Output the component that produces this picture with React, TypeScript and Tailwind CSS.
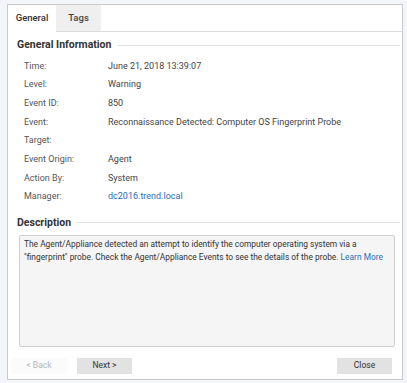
import React from 'react';

const rows: { label: string; value: string; link?: boolean }[] = [
  { label: 'Time:', value: 'June 21, 2018 13:39:07' },
  { label: 'Level:', value: 'Warning' },
  { label: 'Event ID:', value: '850' },
  { label: 'Event:', value: 'Reconnaissance Detected: Computer OS Fingerprint Probe' },
  { label: 'Target:', value: '' },
  { label: 'Event Origin:', value: 'Agent' },
  { label: 'Action By:', value: 'System' },
  { label: 'Manager:', value: 'dc2016.trend.local', link: true },
];

function SectionTitle({ title }: { title: string }) {
  return (
    <div className="flex items-center gap-[6px] h-[16px]">
      <span className="text-[10.5px] font-bold text-[#333]">{title}</span>
      <div className="flex-1 h-px bg-[#e2e2e2]" />
    </div>
  );
}

export default function App() {
  return (
    <div
      className="w-[407px] h-[383px] bg-[#f3f5f8] overflow-hidden pt-[4px] pl-[7px]"
      style={{ fontFamily: 'Roboto, "Liberation Sans", sans-serif' }}
    >
      <div className="w-[396px] h-[376px] border border-[#c9c9c9] bg-white flex flex-col">
        {/* tabs */}
        <div className="flex h-[27px] shrink-0">
          <div className="w-[48px] flex items-center justify-center text-[9.5px] font-medium text-[#333]">
            General
          </div>
          <div className="w-[45px] flex items-center justify-center text-[9.5px] font-medium text-[#444] bg-[#efefef] border-b border-[#dcdcdc]">
            Tags
          </div>
          <div className="flex-1 border-b border-[#dcdcdc]" />
        </div>

        <div className="flex-1 flex flex-col pl-[9px] pr-[2px]">
          <div className="mt-[5px]">
            <SectionTitle title="General Information" />
          </div>

          <div className="mt-[4px] pl-[7px]">
            {rows.map((r) => (
              <div key={r.label} className="flex h-[18.7px] items-center text-[9px]">
                <span className="w-[84px] text-[#555]">{r.label}</span>
                <span className={r.link ? 'text-[#2d6db5]' : 'text-[#444]'}>{r.value}</span>
              </div>
            ))}
          </div>

          <div className="mt-[8px]">
            <SectionTitle title="Description" />
          </div>

          <div className="mt-[4px] ml-[2px] mr-[5px] h-[112px] bg-[#f5f5f5] border border-[#cfcfcf] rounded-[2px] px-[4px] pt-[2px] text-[8.4px] leading-[13px] text-[#333]">
            <div className="whitespace-nowrap">
              The Agent/Appliance detected an attempt to identify the computer operating system via a
            </div>
            <div className="whitespace-nowrap">
              "fingerprint" probe. Check the Agent/Appliance Events to see the details of the probe.{' '}
              <span className="text-[#2d6db5]">Learn More</span>
            </div>
          </div>

          <div className="mt-[11px] flex items-center text-[8.5px]">
            <button className="ml-[-6px] w-[56px] h-[16px] bg-[#fbfbfb] text-[#b5b5b5]">&lt; Back</button>
            <button className="ml-[10px] w-[55px] h-[16px] bg-[#e2e2e2] text-[#333]">Next &gt;</button>
            <div className="flex-1" />
            <button className="mr-[8px] w-[55px] h-[16px] bg-[#e2e2e2] text-[#333]">Close</button>
          </div>
        </div>
      </div>
    </div>
  );
}
